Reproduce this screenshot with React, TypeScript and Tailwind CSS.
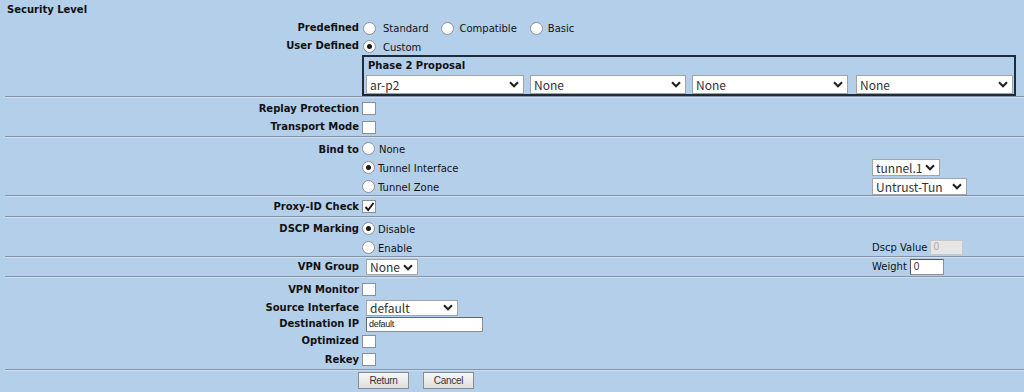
import React from "react";

function Chevron() {
  return (
    <svg width="10" height="7" viewBox="0 0 10 7" className="shrink-0">
      <path d="M1 1.3 L5 5.3 L9 1.3" stroke="#1f1f1f" strokeWidth="2" fill="none" />
    </svg>
  );
}

function Sel({ value, className }: { value: string; className: string }) {
  return (
    <div
      className={`flex items-center justify-between bg-white border border-[#a3a3a3] pl-[3px] pr-[4px] text-[12px] leading-none text-[#333] font-['Noto_Sans_CJK_JP',sans-serif] ${className}`}
    >
      <span className="whitespace-nowrap">{value}</span>
      <Chevron />
    </div>
  );
}

function Radio({ checked, className = "" }: { checked?: boolean; className?: string }) {
  return (
    <div
      className={`w-[13px] h-[13px] rounded-full bg-white border border-[#8a8f96] flex items-center justify-center shrink-0 ${className}`}
    >
      {checked && <div className="w-[5px] h-[5px] rounded-full bg-[#1a1a1a]" />}
    </div>
  );
}

function Check({ checked }: { checked?: boolean }) {
  return (
    <div className="w-[14px] h-[13px] bg-white border border-[#8a9099] flex items-center justify-center shrink-0">
      {checked && (
        <svg width="11" height="10" viewBox="0 0 11 10">
          <path d="M1.5 5 L4.2 8 L9.5 1" stroke="#1a1a1a" strokeWidth="2" fill="none" />
        </svg>
      )}
    </div>
  );
}

function Row({
  label,
  children,
  right,
  className,
}: {
  label?: string;
  children?: React.ReactNode;
  right?: React.ReactNode;
  className: string;
}) {
  return (
    <div className={`flex items-center ${className}`}>
      <div className="w-[359px] text-right font-bold whitespace-nowrap">{label}</div>
      <div className="ml-[3px] w-[510px] flex items-center">{children}</div>
      <div className="flex items-center">{right}</div>
    </div>
  );
}

function Sep() {
  return <div className="ml-[5px] h-[2px] bg-[#8493a7] border-b border-[#cfe0f2]" />;
}

function Btn({ label, className }: { label: string; className: string }) {
  return (
    <div
      className={`h-[17px] flex items-center justify-center border border-[#8c8c8c] bg-gradient-to-b from-[#f7f7f7] to-[#dedede] text-[10px] text-[#333] font-['Liberation_Sans',sans-serif] tracking-[-0.3px] ${className}`}
    >
      {label}
    </div>
  );
}

export default function App() {
  return (
    <div className="w-[1024px] h-[392px] overflow-hidden bg-[#b4cfea] text-[#111] text-[10px] leading-none font-['DejaVu_Sans',sans-serif]">
      {/* Security Level */}
      <div className="h-[19px] pl-[7px] flex items-center font-bold">Security Level</div>
      <Row label="Predefined" className="h-[18px]">
        <Radio className="ml-[1px]" />
        <span className="ml-[7px] mt-[2px]">Standard</span>
        <Radio className="ml-[12px]" />
        <span className="ml-[6px] mt-[2px]">Compatible</span>
        <Radio className="ml-[13px]" />
        <span className="ml-[5px] mt-[2px]">Basic</span>
      </Row>
      <Row label="User Defined" className="h-[18px]">
        <Radio checked className="ml-[1px]" />
        <span className="ml-[7px] mt-[3px]">Custom</span>
      </Row>
      <div className="flex">
        <div className="w-[362px] shrink-0" />
        <div className="w-[654px] h-[41px] border-2 border-[#1d2b3b] pl-[2px] pr-[1px]">
          <div className="h-[18px] flex items-center pl-[2px] font-bold">Phase 2 Proposal</div>
          <div className="flex h-[19px]">
            <Sel value="ar-p2" className="w-[158px] h-[19px]" />
            <Sel value="None" className="ml-[6px] w-[156px] h-[19px]" />
            <Sel value="None" className="ml-[6px] w-[156px] h-[19px]" />
            <Sel value="None" className="ml-[8px] w-[157px] h-[19px]" />
          </div>
        </div>
      </div>
      <Sep />

      {/* Replay / Transport */}
      <div className="pt-[1px]">
        <Row label="Replay Protection" className="h-[19px]">
          <Check />
        </Row>
        <Row label="Transport Mode" className="h-[18px]">
          <Check />
        </Row>
      </div>
      <Sep />

      {/* Bind to */}
      <div className="flex">
        <div className="w-[359px] text-right font-bold pt-[7px]">Bind to</div>
        <div className="ml-[3px] flex flex-col">
          <div className="h-[19px] flex items-center pt-[2px]">
            <Radio />
            <span className="ml-[4px] mt-[3px]">None</span>
          </div>
          <div className="h-[19px] flex items-center pt-[2px]">
            <div className="w-[510px] flex items-center">
              <Radio checked />
              <span className="ml-[3px] mt-[2px]">Tunnel Interface</span>
            </div>
            <Sel value="tunnel.1" className="w-[68px] h-[17px] border-[#8a8a8a]" />
          </div>
          <div className="h-[19px] flex items-center pt-[2px]">
            <div className="w-[510px] flex items-center">
              <Radio />
              <span className="ml-[3px] mt-[2px]">Tunnel Zone</span>
            </div>
            <Sel value="Untrust-Tun" className="w-[95px] h-[17px] border-[#8a8a8a]" />
          </div>
        </div>
      </div>
      <Sep />

      {/* Proxy-ID */}
      <Row label="Proxy-ID Check" className="h-[19px]">
        <Check checked />
      </Row>
      <Sep />

      {/* DSCP */}
      <div className="pt-[1px]">
        <Row label="DSCP Marking" className="h-[19px]">
          <Radio checked />
          <span className="ml-[3px] mt-[3px]">Disable</span>
        </Row>
        <Row
          className="h-[18px]"
          right={
            <>
              <span className="mt-[1px]">Dscp Value</span>
              <div className="ml-[3px] w-[33px] h-[15px] bg-[#e6e6e6] border border-[#c9c9c9] flex items-center pl-[2px] text-[#aaa] font-['Liberation_Sans',sans-serif]">
                0
              </div>
            </>
          }
        >
          <Radio />
          <span className="ml-[3px] mt-[3px]">Enable</span>
        </Row>
      </div>
      <Sep />

      {/* VPN Group */}
      <Row
        label="VPN Group"
        className="h-[18px]"
        right={
          <>
            <span>Weight</span>
            <div className="ml-[3px] w-[34px] h-[16px] bg-white border border-[#8e8e8e] border-t-[#555] border-l-[#555] flex items-center pl-[3px] text-[#333] font-['Liberation_Sans',sans-serif]">
              0
            </div>
          </>
        }
      >
        <Sel value="None" className="ml-[4px] w-[52px] h-[16px] border-[#8a8a8a]" />
      </Row>
      <Sep />

      {/* VPN Monitor */}
      <div className="pt-[2px]">
        <Row label="VPN Monitor" className="h-[19px]">
          <Check />
        </Row>
        <Row label="Source Interface" className="h-[17px]">
          <Sel value="default" className="ml-[4px] w-[92px] h-[16px] border-[#8a8a8a]" />
        </Row>
        <Row label="Destination IP" className="h-[16px]">
          <div className="ml-[4px] w-[117px] h-[15px] bg-white border border-[#8e8e8e] border-t-[#666] border-l-[#666] flex items-center pl-[2px] text-[9px] text-[#222] font-['Liberation_Sans',sans-serif] tracking-[-0.3px]">
            default
          </div>
        </Row>
        <Row label="Optimized" className="h-[18px]">
          <Check />
        </Row>
        <Row label="Rekey" className="h-[19px]">
          <Check />
        </Row>
      </div>
      <Sep />

      {/* Buttons */}
      <div className="flex items-start pt-[1px]">
        <div className="w-[358px] shrink-0" />
        <Btn label="Return" className="w-[51px]" />
        <Btn label="Cancel" className="ml-[14px] w-[51px]" />
      </div>
    </div>
  );
}
